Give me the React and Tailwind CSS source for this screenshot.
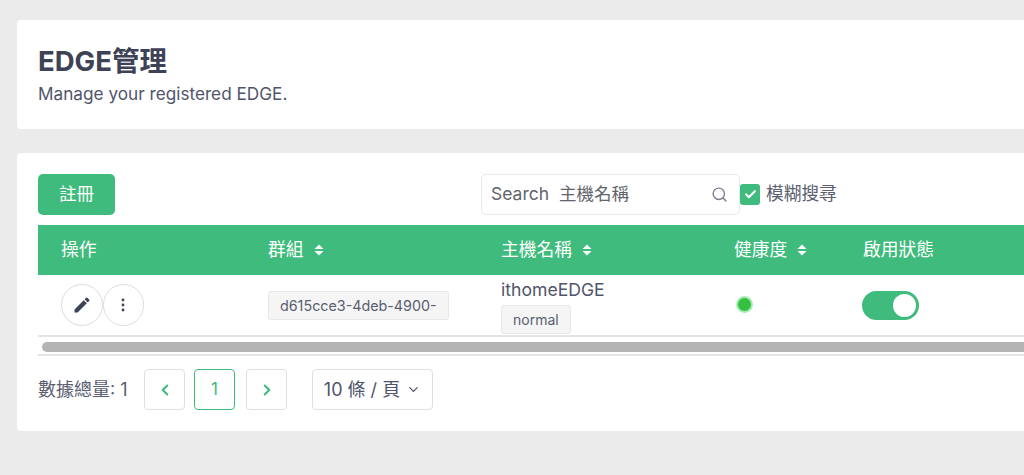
import { ChevronDown, ChevronLeft, ChevronRight, Search, Check } from "lucide-react";

const FONT = "font-['Inter','Noto_Sans_CJK_TC',sans-serif]";

function SortIcon() {
  return (
    <svg width="10" height="14" viewBox="0 0 10 14" className="ml-[10px]" fill="currentColor">
      <path d="M5 1.5 9.5 6H.5z" />
      <path d="M5 12.5.5 8h9z" />
    </svg>
  );
}

function HeadCell({ width, sort, children }) {
  return (
    <div className={`flex shrink-0 items-center pl-[23px] ${width}`}>
      <span>{children}</span>
      {sort && <SortIcon />}
    </div>
  );
}

function Tag({ wide, children }) {
  return (
    <span className={`inline-block rounded-[3px] border border-[#e6e7eb] bg-[#f5f5f6] px-[11px] leading-[27px] text-[#5a5e70] ${wide ? "text-[14.3px]" : "text-[14px]"}`}>
      {children}
    </span>
  );
}

function RoundButton({ children }) {
  return (
    <button type="button" className="flex h-[42px] w-[41.5px] shrink-0 items-center justify-center rounded-full border border-[#dcdde1] bg-white text-[#3d4257]">
      {children}
    </button>
  );
}

function PageButton({ active, children }) {
  return (
    <button
      type="button"
      className={`flex h-[41px] w-[41px] items-center justify-center rounded-[4px] border bg-white text-[#3fbb7d] ${active ? "border-[#3fbb7d]" : "border-[#dfe0e5]"}`}
    >
      {children}
    </button>
  );
}

export default function App() {
  return (
    <div className={`h-[475px] w-[1024px] overflow-hidden bg-[#ebebeb] pl-[17px] pt-[20px] ${FONT}`}>
      <div className="h-[109px] w-[1100px] rounded-[4px] bg-white pl-[21px] pt-[24px]">
        <h1 className="text-[27.5px] font-bold leading-[34px] text-[#3d4257]">EDGE管理</h1>
        <p className="mt-[4px] text-[17.2px] leading-[24px] text-[#50556b]">Manage your registered EDGE.</p>
      </div>

      <div className="mt-[24px] h-[278px] w-[1100px] rounded-[4px] bg-white pl-[21px] pt-[21px]">
        <div className="flex h-[41px] items-center">
          <button type="button" className="h-[41px] w-[77px] rounded-[5px] bg-[#3fbb7d] text-[17.5px] text-white">
            註冊
          </button>
          <div className="ml-[366px] flex h-[41px] w-[259px] shrink-0 items-center rounded-[5px] border border-[#e9e9ec] pl-[9px] pr-[11px]">
            <span className="flex-1 text-[17.5px] text-[#62646c]">
              Search&nbsp; 主機名稱
            </span>
            <Search size={17} strokeWidth={2} className="text-[#7d8293]" />
          </div>
          <div className="flex items-center">
            <span className="flex h-[21px] w-[20px] items-center justify-center rounded-[3px] bg-[#3fbb7d] text-white">
              <Check size={13} strokeWidth={4} />
            </span>
            <span className="ml-[6px] text-[17.7px] text-[#5a5e70]">模糊搜尋</span>
          </div>
        </div>

        <div className="mt-[10px] flex h-[50px] items-center bg-[#3fbb7d] text-[17.8px] text-white">
          <HeadCell width="w-[207px]">操作</HeadCell>
          <HeadCell width="w-[233px]" sort>群組</HeadCell>
          <HeadCell width="w-[233px]" sort>主機名稱</HeadCell>
          <HeadCell width="w-[129px]" sort>健康度</HeadCell>
          <HeadCell width="w-[200px]">啟用狀態</HeadCell>
        </div>

        <div className="flex h-[62px] items-center border-b-2 border-[#e4e4e8] text-[#50556b]">
          <div className="flex w-[207px] shrink-0 pl-[23px]">
            <RoundButton>
              <svg width="20" height="20" viewBox="0 0 24 24" fill="currentColor">
                <path d="M3 17.25V21h3.75L17.81 9.94l-3.75-3.75zM20.71 7.04a1 1 0 0 0 0-1.41l-2.34-2.34a1 1 0 0 0-1.41 0l-1.83 1.83 3.75 3.75z" />
              </svg>
            </RoundButton>
            <RoundButton>
              <svg width="16" height="16" viewBox="0 0 16 16" fill="currentColor">
                <circle cx="8" cy="3" r="1.4" />
                <circle cx="8" cy="8" r="1.4" />
                <circle cx="8" cy="13" r="1.4" />
              </svg>
            </RoundButton>
          </div>
          <div className="w-[233px] shrink-0 pl-[23px]">
            <Tag wide>d615cce3-4deb-4900-</Tag>
          </div>
          <div className="w-[233px] shrink-0 pl-[23px]">
            <div className="text-[17.6px] leading-[26px]">ithomeEDGE</div>
            <div className="mt-[2px] flex"><Tag>normal</Tag></div>
          </div>
          <div className="w-[129px] shrink-0 pb-[1px] pl-[25px]">
            <div className="h-[17px] w-[17px] rounded-full border-2 border-[#a8eab4] bg-[#36c03f]" />
          </div>
          <div className="w-[200px] shrink-0 pl-[22px]">
            <div className="flex h-[29px] w-[57px] items-center justify-end rounded-full bg-[#3fbb7d] pr-[3px]">
              <div className="h-[23px] w-[23px] rounded-full bg-white" />
            </div>
          </div>
        </div>

        <div className="flex h-[19px] items-center border-b-2 border-[#e4e4e8] pl-[4px] pt-[2px]">
          <div className="h-[10px] w-full rounded-l-full bg-[#b4b4b4]" />
        </div>

        <div className="mt-[13px] flex items-center">
          <span className="w-[106px] shrink-0 text-[18px] text-[#5a5e70]">數據總量: 1</span>
          <PageButton><ChevronLeft size={18} strokeWidth={2.8} /></PageButton>
          <div className="ml-[9px]">
            <PageButton active><span className="text-[17px]">1</span></PageButton>
          </div>
          <div className="ml-[11px]">
            <PageButton><ChevronRight size={18} strokeWidth={2.8} /></PageButton>
          </div>
          <button type="button" className="ml-[25px] flex h-[41px] w-[121px] items-center justify-center gap-[6px] rounded-[4px] border border-[#dfe0e5] bg-white text-[18px] text-[#50556b]">
            10 條 / 頁
            <ChevronDown size={15} strokeWidth={2} />
          </button>
        </div>
      </div>
    </div>
  );
}
